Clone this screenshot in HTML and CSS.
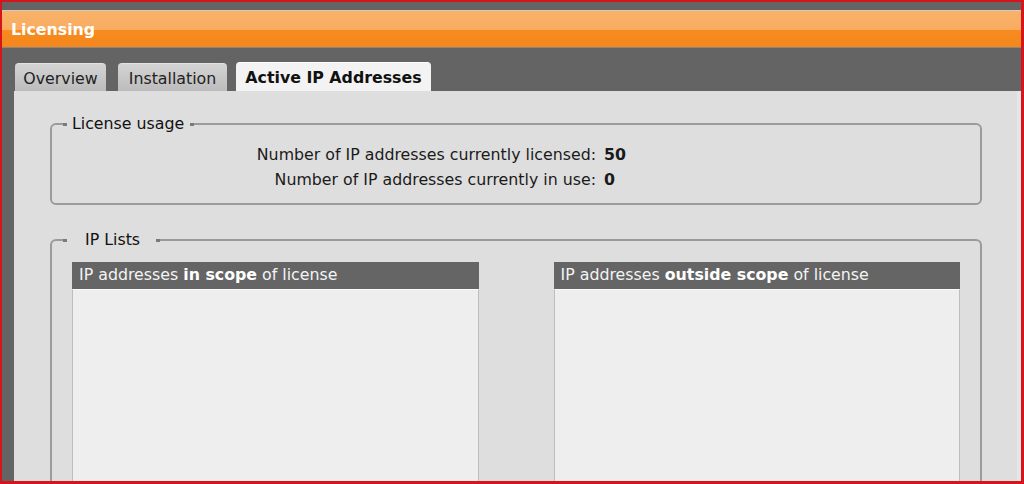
FILE: index.html
```html
<!DOCTYPE html>
<html lang="en">
<head>
  <meta charset="UTF-8" />
  <title>Licensing</title>
  <link rel="stylesheet" href="styles.css">
</head>
<body>
  <div class="window">
    <div class="topbar"></div>
    <div class="header">Licensing</div>

    <div class="tabs">
      <div class="tab tab-overview">Overview</div>
      <div class="tab tab-install">Installation</div>
      <div class="tab tab-active active">Active IP Addresses</div>
    </div>

    <div class="panel">
      <fieldset class="group">
        <legend>License usage</legend>
        <div class="usage">
          <span class="label">Number of IP addresses currently licensed:</span>
          <span class="value">50</span>
          <span class="label">Number of IP addresses currently in use:</span>
          <span class="value">0</span>
        </div>
      </fieldset>

      <fieldset class="group lists">
        <legend class="wide">IP Lists</legend>
        <div class="list-row">
          <div class="list">
            <div class="list-head">IP addresses <b>in scope</b> of license</div>
            <div class="list-body"></div>
          </div>
          <div class="list">
            <div class="list-head">IP addresses <b>outside scope</b> of license</div>
            <div class="list-body"></div>
          </div>
        </div>
      </fieldset>
    </div>
  </div>
</body>
</html>
```

FILE: styles.css
```css
html, body {
  margin: 0;
  padding: 0;
}
body {
  font-family: "DejaVu Sans", Verdana, sans-serif;
  font-size: 15.8px;
  color: #1a1a1a;
}
.window {
  height: 484px;
  box-sizing: border-box;
  border: 2px solid #d6141b;
  border-right-width: 3px;
  border-bottom-width: 3px;
  background: #646464;
  display: flex;
  flex-direction: column;
  overflow: hidden;
}
.topbar,
.header,
.tabs {
  flex-shrink: 0;
}
.topbar {
  height: 8px;
  border-bottom: 1px solid #d3cbbd;
}
.header {
  height: 36px;
  line-height: 37px;
  padding-left: 9px;
  color: #fff;
  font-weight: bold;
  background: linear-gradient(#f9b169 0, #f8ac60 52%, #f78b20 54%, #f5871c 100%);
  border-bottom: 1px solid #8c8680;
}
.tabs {
  display: flex;
  align-items: flex-end;
  padding: 14px 0 0 13px;
}
.tab {
  height: 28px;
  line-height: 29px;
  text-align: center;
  margin-right: 12px;
  background: linear-gradient(#d4d4d4, #bcbcbc);
  border-top: 1px solid #e2e2e2;
  border-radius: 4px 4px 0 0;
  color: #222;
  box-sizing: border-box;
}
.tab-overview {
  width: 91px;
}
.tab-install {
  width: 109px;
  margin-right: 9px;
}
.tab-active {
  width: 195px;
}
.tab.active {
  height: 29px;
  background: #f3f3f3;
  border-top-color: #fff;
  font-weight: bold;
  color: #111;
}
.panel {
  flex: 1;
  min-height: 0;
  overflow: hidden;
  margin-left: 12px;
  background: #dedede;
  border-right: 4px solid #e6e6e6;
  padding-top: 24px;
}
.group {
  margin: 0 35px 0 36px;
  padding: 0;
  border: 2px solid #9b9b9b;
  border-radius: 6px;
}
.group legend {
  margin-left: 11px;
  padding: 0;
  line-height: 18px;
  display: flex;
  align-items: center;
  color: #111;
}
.group legend::before,
.group legend::after {
  content: "";
  width: 4px;
  height: 3px;
  background: #7a7a7a;
}
.group legend::before {
  margin-right: 5px;
}
.group legend::after {
  margin-left: 6px;
}
.group legend.wide::before {
  margin-right: 18px;
}
.group legend.wide::after {
  margin-left: 16px;
}
.usage {
  display: grid;
  grid-template-columns: 544px 1fr;
  column-gap: 8px;
  line-height: 25px;
  padding: 9px 0 11px;
}
.usage .label {
  text-align: right;
}
.usage .value {
  font-weight: bold;
}
.lists {
  margin-top: 26px;
}
.list-row {
  display: grid;
  grid-template-columns: 1fr 1fr;
  column-gap: 75px;
  padding: 13px 20px 0;
}
.list-head {
  height: 27px;
  line-height: 25px;
  padding-left: 7px;
  background: #656565;
  color: #f4f4f4;
}
.list-head b {
  color: #fff;
}
.list-body {
  height: 300px;
  background: #eeeeee;
  border: 1px solid #bdbdbd;
  border-top: 1px solid #fafafa;
}
```
